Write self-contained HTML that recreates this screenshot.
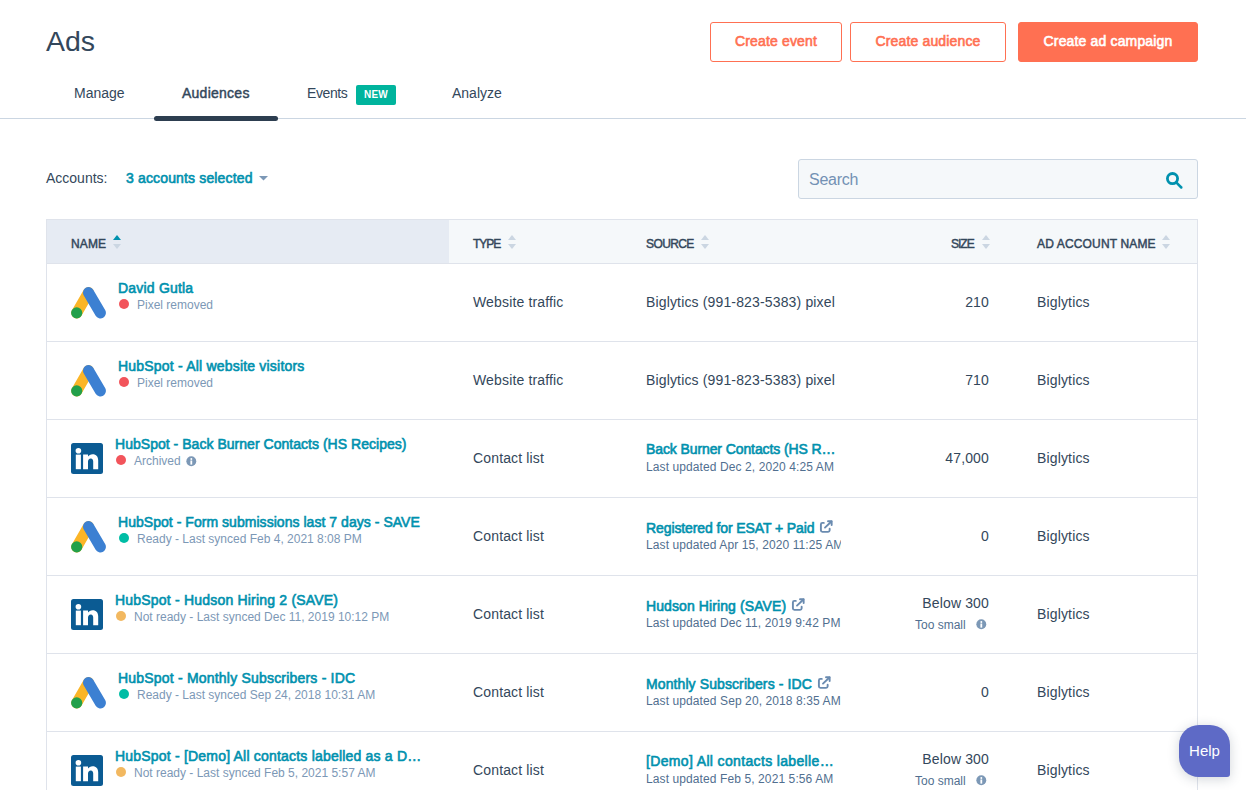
<!DOCTYPE html>
<html>
<head>
<meta charset="utf-8">
<style>
*{box-sizing:border-box;margin:0;padding:0}
html,body{width:1246px;height:790px;overflow:hidden;background:#fff}
body{position:relative;font-family:"Liberation Sans",sans-serif;color:#33475b;-webkit-font-smoothing:antialiased}
.abs{position:absolute;white-space:nowrap}
.t{position:absolute;white-space:nowrap;line-height:1}
.btn{position:absolute;top:22px;height:40px;border:1px solid #ff7052;border-radius:3px;color:#ff7052;font-size:14px;font-weight:normal;-webkit-text-stroke-width:0.6px;text-align:center;line-height:37px;letter-spacing:0.15px}
.btn.fill{background:#ff7052;color:#fff}
.tab{position:absolute;font-size:14px;line-height:1;top:86px}
.hdr{position:absolute;top:219px;height:45px;left:46px;width:1152px;background:#f5f8fa;border:1px solid #dfe3eb}
.hcol{position:absolute;top:238px;font-size:12px;font-weight:normal;-webkit-text-stroke:0.45px #33475b;line-height:1;letter-spacing:-0.1px;color:#33475b}
.arr{position:absolute;width:8px;height:15px}
.row{position:absolute;left:46px;width:1152px;height:78px;border-left:1px solid #dfe3eb;border-right:1px solid #dfe3eb;border-bottom:1px solid #dfe3eb}
.nm{position:absolute;font-size:14px;-webkit-text-stroke-width:0.6px;color:#0091ae;line-height:1;letter-spacing:0.2px}
.sub{position:absolute;font-size:12px;color:#7c98b6;line-height:1}
.dot{position:absolute;width:10px;height:10px;border-radius:50%}
.cell{position:absolute;font-size:14px;line-height:1;color:#33475b;letter-spacing:0.15px}
.src{position:absolute;font-size:14px;-webkit-text-stroke-width:0.6px;color:#0091ae;line-height:1;letter-spacing:-0.1px}
.upd{position:absolute;font-size:12px;color:#516f90;line-height:1.2;width:194.5px;overflow:hidden;white-space:nowrap;letter-spacing:0.1px}
</style>
</head>
<body>
<!-- header -->
<div class="t" style="left:46px;top:27px;font-size:28.5px;">Ads</div>
<div class="btn" style="left:710px;width:132px">Create event</div>
<div class="btn" style="left:850px;width:156px">Create audience</div>
<div class="btn fill" style="left:1018px;width:180px">Create ad campaign</div>

<div class="tab" style="left:74px">Manage</div>
<div class="tab" style="left:182px;-webkit-text-stroke-width:0.45px;letter-spacing:0.25px">Audiences</div>
<div class="tab" style="left:307px;letter-spacing:-0.4px">Events</div>
<div class="abs" style="left:356px;top:85px;width:40px;height:20px;background:#00b49d;border-radius:2px;color:#fff;font-size:10px;font-weight:bold;letter-spacing:0.2px;text-align:center;line-height:19px">NEW</div>
<div class="tab" style="left:452px">Analyze</div>
<div class="abs" style="left:0;top:118px;width:1246px;height:1px;background:#cbd6e2"></div>
<div class="abs" style="left:154px;top:116px;width:124px;height:5px;border-radius:3px;background:#2d3e50"></div>

<!-- accounts -->
<div class="t" style="left:46px;top:171px;font-size:14px">Accounts:</div>
<div class="t" style="left:126px;top:171px;font-size:14px;-webkit-text-stroke-width:0.6px;color:#0091ae;letter-spacing:0.15px">3 accounts selected</div>
<svg class="abs" style="left:259px;top:176px" width="9" height="5" viewBox="0 0 9 5"><path d="M0 0H9L4.5 4.5Z" fill="#7c98b6"/></svg>

<!-- search -->
<div class="abs" style="left:798px;top:159px;width:400px;height:40px;background:#f5f8fa;border:1px solid #cbd6e2;border-radius:3px"></div>
<div class="t" style="left:809px;top:172px;font-size:16px;color:#7391b4;letter-spacing:-0.25px">Search</div>
<svg class="abs" style="left:1164px;top:172px" width="20" height="18" viewBox="0 0 20 18"><circle cx="8.5" cy="6.6" r="5.1" fill="none" stroke="#0091ae" stroke-width="2.8"/><path d="M12.2 10.4L17.3 15.5" stroke="#0091ae" stroke-width="2.5" stroke-linecap="round"/></svg>

<!-- table header -->
<div class="hdr"></div>
<div class="abs" style="left:47px;top:220px;width:402px;height:43px;background:#e6ebf3"></div>
<div class="hcol" style="left:71px;letter-spacing:0.15px">NAME</div>
<div class="hcol" style="left:473px;letter-spacing:-1px">TYPE</div>
<div class="hcol" style="left:646px;letter-spacing:-0.6px">SOURCE</div>
<div class="hcol" style="left:951px;letter-spacing:-1px">SIZE</div>
<div class="hcol" style="left:1037px;letter-spacing:0.15px">AD ACCOUNT NAME</div>
<svg class="abs" style="left:113px;top:234px" width="8" height="16" viewBox="0 0 8 16"><path d="M0 6L4 1L8 6Z" fill="#0091ae"/><path d="M0 10L4 15L8 10Z" fill="#cbd6e2"/></svg>
<svg class="abs" style="left:508px;top:234px" width="8" height="16" viewBox="0 0 8 16"><path d="M0 6L4 1L8 6Z" fill="#cbd6e2"/><path d="M0 10L4 15L8 10Z" fill="#cbd6e2"/></svg>
<svg class="abs" style="left:701px;top:234px" width="8" height="16" viewBox="0 0 8 16"><path d="M0 6L4 1L8 6Z" fill="#cbd6e2"/><path d="M0 10L4 15L8 10Z" fill="#cbd6e2"/></svg>
<svg class="abs" style="left:982px;top:234px" width="8" height="16" viewBox="0 0 8 16"><path d="M0 6L4 1L8 6Z" fill="#cbd6e2"/><path d="M0 10L4 15L8 10Z" fill="#cbd6e2"/></svg>
<svg class="abs" style="left:1162px;top:234px" width="8" height="16" viewBox="0 0 8 16"><path d="M0 6L4 1L8 6Z" fill="#cbd6e2"/><path d="M0 10L4 15L8 10Z" fill="#cbd6e2"/></svg>
<svg class="abs" style="left:71px;top:287px" width="36" height="33" viewBox="0 0 36 33"><line x1="5.7" y1="25.9" x2="17.5" y2="5.6" stroke="#fbb527" stroke-width="11" stroke-linecap="round"/><line x1="17.5" y1="5.6" x2="29.4" y2="25.9" stroke="#3c80d2" stroke-width="11" stroke-linecap="round"/><circle cx="5.7" cy="25.9" r="5.6" fill="#23a04a"/></svg>
<div class="nm" style="left:118px;top:281px;letter-spacing:0.2px">David Gutla</div>
<div class="dot" style="left:119px;top:299px;background:#f2545b"></div>
<div class="sub" style="left:137px;top:299px">Pixel removed</div>
<div class="cell" style="left:473px;top:295px">Website traffic</div>
<div class="cell" style="left:646px;top:295px">Biglytics (991-823-5383) pixel</div>
<div class="cell" style="right:257px;top:295px">210</div>
<div class="cell" style="left:1037px;top:295px">Biglytics</div>
<div class="abs" style="left:46px;top:341px;width:1152px;height:1px;background:#dfe3eb"></div>
<svg class="abs" style="left:71px;top:365px" width="36" height="33" viewBox="0 0 36 33"><line x1="5.7" y1="25.9" x2="17.5" y2="5.6" stroke="#fbb527" stroke-width="11" stroke-linecap="round"/><line x1="17.5" y1="5.6" x2="29.4" y2="25.9" stroke="#3c80d2" stroke-width="11" stroke-linecap="round"/><circle cx="5.7" cy="25.9" r="5.6" fill="#23a04a"/></svg>
<div class="nm" style="left:118px;top:359px;letter-spacing:0.2px">HubSpot - All website visitors</div>
<div class="dot" style="left:119px;top:377px;background:#f2545b"></div>
<div class="sub" style="left:137px;top:377px">Pixel removed</div>
<div class="cell" style="left:473px;top:373px">Website traffic</div>
<div class="cell" style="left:646px;top:373px">Biglytics (991-823-5383) pixel</div>
<div class="cell" style="right:257px;top:373px">710</div>
<div class="cell" style="left:1037px;top:373px">Biglytics</div>
<div class="abs" style="left:46px;top:419px;width:1152px;height:1px;background:#dfe3eb"></div>
<svg class="abs" style="left:71px;top:443px" width="32" height="31" viewBox="0 0 32 31"><rect x="0" y="0" width="32" height="31" rx="2.5" fill="#0b5b93"/><circle cx="7.4" cy="7.7" r="2.8" fill="#fff"/><rect x="4.8" y="11.6" width="5.1" height="14.6" fill="#fff"/><path d="M12.1 11.6H17V13.6C17.9 12.1 19.5 11.2 21.6 11.2C25.3 11.2 27.2 13.6 27.2 17.6V26.2H22.2V18.6C22.2 16.7 21.5 15.4 19.8 15.4C18 15.4 17 16.7 17 18.6V26.2H12.1Z" fill="#fff"/></svg>
<div class="nm" style="left:115px;top:437px;letter-spacing:0.03px">HubSpot - Back Burner Contacts (HS Recipes)</div>
<div class="dot" style="left:116px;top:455px;background:#f2545b"></div>
<div class="sub" style="left:134px;top:455px">Archived</div>
<svg class="abs" style="left:186px;top:456px" width="11" height="11" viewBox="0 0 11 11"><circle cx="5.3" cy="5.2" r="4.95" fill="#7c98b6"/><circle cx="5.3" cy="2.9" r="1" fill="#fff"/><rect x="4.4" y="4.5" width="1.8" height="4.1" fill="#fff"/></svg>
<div class="cell" style="left:473px;top:451px">Contact list</div>
<div class="src" style="left:646px;top:442px;letter-spacing:-0.1px">Back Burner Contacts (HS R…</div>
<div class="upd" style="left:646px;top:460px">Last updated Dec 2, 2020 4:25 AM</div>
<div class="cell" style="right:257px;top:451px">47,000</div>
<div class="cell" style="left:1037px;top:451px">Biglytics</div>
<div class="abs" style="left:46px;top:497px;width:1152px;height:1px;background:#dfe3eb"></div>
<svg class="abs" style="left:71px;top:521px" width="36" height="33" viewBox="0 0 36 33"><line x1="5.7" y1="25.9" x2="17.5" y2="5.6" stroke="#fbb527" stroke-width="11" stroke-linecap="round"/><line x1="17.5" y1="5.6" x2="29.4" y2="25.9" stroke="#3c80d2" stroke-width="11" stroke-linecap="round"/><circle cx="5.7" cy="25.9" r="5.6" fill="#23a04a"/></svg>
<div class="nm" style="left:118px;top:515px;letter-spacing:0.04px">HubSpot - Form submissions last 7 days - SAVE</div>
<div class="dot" style="left:119px;top:533px;background:#00bda5"></div>
<div class="sub" style="left:137px;top:533px">Ready - Last synced Feb 4, 2021 8:08 PM</div>
<div class="cell" style="left:473px;top:529px">Contact list</div>
<div class="src" style="left:646px;top:520px;letter-spacing:-0.1px">Registered for ESAT + Paid<svg style="vertical-align:-1px;margin-left:5px" width="14" height="14" viewBox="0 0 14 14"><g fill="none" stroke="#6a8bb0" stroke-width="1.9" stroke-linecap="round" stroke-linejoin="round"><path d="M4.8 2.9H3.4A1.5 1.5 0 0 0 1.9 4.4V10.35A1.5 1.5 0 0 0 3.4 11.85H9.15A1.5 1.5 0 0 0 10.65 10.35V8.7"/><path d="M9 1.25H12.65V5"/><path d="M12.4 1.5L6 7.6"/></g></svg></div>
<div class="upd" style="left:646px;top:538px">Last updated Apr 15, 2020 11:25 AM</div>
<div class="cell" style="right:257px;top:529px">0</div>
<div class="cell" style="left:1037px;top:529px">Biglytics</div>
<div class="abs" style="left:46px;top:575px;width:1152px;height:1px;background:#dfe3eb"></div>
<svg class="abs" style="left:71px;top:599px" width="32" height="31" viewBox="0 0 32 31"><rect x="0" y="0" width="32" height="31" rx="2.5" fill="#0b5b93"/><circle cx="7.4" cy="7.7" r="2.8" fill="#fff"/><rect x="4.8" y="11.6" width="5.1" height="14.6" fill="#fff"/><path d="M12.1 11.6H17V13.6C17.9 12.1 19.5 11.2 21.6 11.2C25.3 11.2 27.2 13.6 27.2 17.6V26.2H22.2V18.6C22.2 16.7 21.5 15.4 19.8 15.4C18 15.4 17 16.7 17 18.6V26.2H12.1Z" fill="#fff"/></svg>
<div class="nm" style="left:115px;top:593px;letter-spacing:0.2px">HubSpot - Hudson Hiring 2 (SAVE)</div>
<div class="dot" style="left:116px;top:611px;background:#f2b860"></div>
<div class="sub" style="left:134px;top:611px">Not ready - Last synced Dec 11, 2019 10:12 PM</div>
<div class="cell" style="left:473px;top:607px">Contact list</div>
<div class="src" style="left:646px;top:598px;letter-spacing:0.1px">Hudson Hiring (SAVE)<svg style="vertical-align:-1px;margin-left:5px" width="14" height="14" viewBox="0 0 14 14"><g fill="none" stroke="#6a8bb0" stroke-width="1.9" stroke-linecap="round" stroke-linejoin="round"><path d="M4.8 2.9H3.4A1.5 1.5 0 0 0 1.9 4.4V10.35A1.5 1.5 0 0 0 3.4 11.85H9.15A1.5 1.5 0 0 0 10.65 10.35V8.7"/><path d="M9 1.25H12.65V5"/><path d="M12.4 1.5L6 7.6"/></g></svg></div>
<div class="upd" style="left:646px;top:616px">Last updated Dec 11, 2019 9:42 PM</div>
<div class="cell" style="right:257px;top:596px">Below 300</div>
<div class="sub" style="left:915px;top:619px;color:#516f90">Too small</div>
<svg class="abs" style="left:976px;top:619px" width="11" height="11" viewBox="0 0 11 11"><circle cx="5.3" cy="5.2" r="4.95" fill="#7c98b6"/><circle cx="5.3" cy="2.9" r="1" fill="#fff"/><rect x="4.4" y="4.5" width="1.8" height="4.1" fill="#fff"/></svg>
<div class="cell" style="left:1037px;top:607px">Biglytics</div>
<div class="abs" style="left:46px;top:653px;width:1152px;height:1px;background:#dfe3eb"></div>
<svg class="abs" style="left:71px;top:677px" width="36" height="33" viewBox="0 0 36 33"><line x1="5.7" y1="25.9" x2="17.5" y2="5.6" stroke="#fbb527" stroke-width="11" stroke-linecap="round"/><line x1="17.5" y1="5.6" x2="29.4" y2="25.9" stroke="#3c80d2" stroke-width="11" stroke-linecap="round"/><circle cx="5.7" cy="25.9" r="5.6" fill="#23a04a"/></svg>
<div class="nm" style="left:118px;top:671px;letter-spacing:0.2px">HubSpot - Monthly Subscribers - IDC</div>
<div class="dot" style="left:119px;top:689px;background:#00bda5"></div>
<div class="sub" style="left:137px;top:689px">Ready - Last synced Sep 24, 2018 10:31 AM</div>
<div class="cell" style="left:473px;top:685px">Contact list</div>
<div class="src" style="left:646px;top:676px;letter-spacing:0.1px">Monthly Subscribers - IDC<svg style="vertical-align:-1px;margin-left:5px" width="14" height="14" viewBox="0 0 14 14"><g fill="none" stroke="#6a8bb0" stroke-width="1.9" stroke-linecap="round" stroke-linejoin="round"><path d="M4.8 2.9H3.4A1.5 1.5 0 0 0 1.9 4.4V10.35A1.5 1.5 0 0 0 3.4 11.85H9.15A1.5 1.5 0 0 0 10.65 10.35V8.7"/><path d="M9 1.25H12.65V5"/><path d="M12.4 1.5L6 7.6"/></g></svg></div>
<div class="upd" style="left:646px;top:694px">Last updated Sep 20, 2018 8:35 AM</div>
<div class="cell" style="right:257px;top:685px">0</div>
<div class="cell" style="left:1037px;top:685px">Biglytics</div>
<div class="abs" style="left:46px;top:731px;width:1152px;height:1px;background:#dfe3eb"></div>
<svg class="abs" style="left:71px;top:755px" width="32" height="31" viewBox="0 0 32 31"><rect x="0" y="0" width="32" height="31" rx="2.5" fill="#0b5b93"/><circle cx="7.4" cy="7.7" r="2.8" fill="#fff"/><rect x="4.8" y="11.6" width="5.1" height="14.6" fill="#fff"/><path d="M12.1 11.6H17V13.6C17.9 12.1 19.5 11.2 21.6 11.2C25.3 11.2 27.2 13.6 27.2 17.6V26.2H22.2V18.6C22.2 16.7 21.5 15.4 19.8 15.4C18 15.4 17 16.7 17 18.6V26.2H12.1Z" fill="#fff"/></svg>
<div class="nm" style="left:115px;top:749px;letter-spacing:0.2px">HubSpot - [Demo] All contacts labelled as a D…</div>
<div class="dot" style="left:116px;top:767px;background:#f2b860"></div>
<div class="sub" style="left:134px;top:767px">Not ready - Last synced Feb 5, 2021 5:57 AM</div>
<div class="cell" style="left:473px;top:763px">Contact list</div>
<div class="src" style="left:646px;top:754px;letter-spacing:0.35px">[Demo] All contacts labelle…</div>
<div class="upd" style="left:646px;top:772px">Last updated Feb 5, 2021 5:56 AM</div>
<div class="cell" style="right:257px;top:752px">Below 300</div>
<div class="sub" style="left:915px;top:775px;color:#516f90">Too small</div>
<svg class="abs" style="left:976px;top:775px" width="11" height="11" viewBox="0 0 11 11"><circle cx="5.3" cy="5.2" r="4.95" fill="#7c98b6"/><circle cx="5.3" cy="2.9" r="1" fill="#fff"/><rect x="4.4" y="4.5" width="1.8" height="4.1" fill="#fff"/></svg>
<div class="cell" style="left:1037px;top:763px">Biglytics</div>
<div class="abs" style="left:46px;top:809px;width:1152px;height:1px;background:#dfe3eb"></div>
<div class="abs" style="left:46px;top:219px;width:1px;height:580px;background:#dfe3eb"></div>
<div class="abs" style="left:1197px;top:219px;width:1px;height:580px;background:#dfe3eb"></div>
<div class="abs" style="left:1179px;top:725px;width:51px;height:52px;background:#5e6ac6;border-radius:20px 20px 3px 20px;box-shadow:0 2px 12px rgba(45,62,80,0.22);color:#fff;font-size:15px;text-align:center;line-height:52px">Help</div>
</body>
</html>
